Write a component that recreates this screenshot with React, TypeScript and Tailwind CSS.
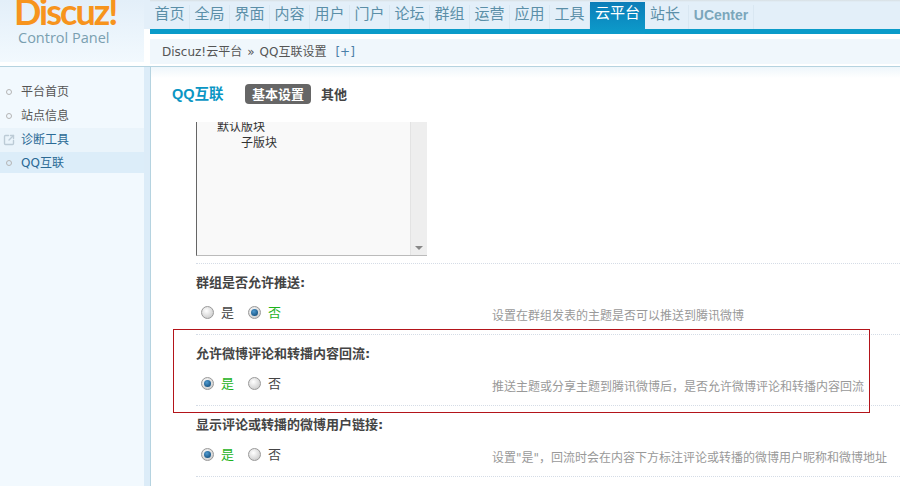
import React from 'react';
import { SquareArrowOutUpRight } from 'lucide-react';

const navItems = ['首页', '全局', '界面', '内容', '用户', '门户', '论坛', '群组', '运营', '应用', '工具'];

const sideItems = [
  { label: '平台首页', rowClass: 'h-6', textClass: 'text-[#555]' },
  { label: '站点信息', rowClass: 'h-6', textClass: 'text-[#555]' },
  { label: '诊断工具', rowClass: 'h-6 bg-[#eaf4fb]', textClass: 'text-[#2b6a95]', icon: true },
  { label: 'QQ互联', rowClass: 'h-[21px] bg-[#dcedf9]', textClass: 'text-[#2b6a95]' },
];

const settings = [
  { label: '群组是否允许推送:', yes: false, desc: '设置在群组发表的主题是否可以推送到腾讯微博' },
  { label: '允许微博评论和转播内容回流:', yes: true, desc: '推送主题或分享主题到腾讯微博后\uFF0C是否允许微博评论和转播内容回流' },
  { label: '显示评论或转播的微博用户链接:', yes: true, desc: '设置"是"\uFF0C回流时会在内容下方标注评论或转播的微博用户昵称和微博地址' },
];

function Radio({ checked }: { checked: boolean }) {
  return (
    <span className="flex h-[13px] w-[13px] items-center justify-center rounded-full border border-[#999] bg-[radial-gradient(circle_at_40%_35%,#fff,#c0c0c0)]">
      {checked && <span className="h-[7px] w-[7px] rounded-full bg-[radial-gradient(circle_at_40%_35%,#4f9ad0,#073f6c)]" />}
    </span>
  );
}

function Option({ label, checked }: { label: string; checked: boolean }) {
  return (
    <div className="flex w-[47px] items-center">
      <Radio checked={checked} />
      <span className={`ml-[7px] text-[13px] leading-none ${checked ? 'text-[#1db31d]' : 'text-[#444]'}`}>{label}</span>
    </div>
  );
}

function SettingRow({ label, yes, desc }: { label: string; yes: boolean; desc: string }) {
  return (
    <div className="h-[71px] border-t border-dotted border-[#d5dce6]">
      <div className="pt-[11px] text-[13px] leading-[16px] font-bold text-[#444]">{label}</div>
      <div className="mt-[15px] flex items-center pl-[5px]">
        <Option label="是" checked={yes} />
        <Option label="否" checked={!yes} />
        <span className="ml-[197px] translate-y-[3px] text-[12px] leading-none whitespace-nowrap text-[#999]">{desc}</span>
      </div>
    </div>
  );
}

export default function App() {
  return (
    <div className="relative flex h-[486px] w-[900px] flex-col overflow-hidden bg-white font-['DejaVu_Sans','Noto_Sans_CJK_SC',sans-serif]">
      {/* Header */}
      <div className="flex h-[67px] shrink-0 border-b border-[#b5d3e0]">
        <div className="h-[62px] w-[144px] shrink-0 overflow-hidden bg-[linear-gradient(#e3eff9,#f2f9fe)] pl-[14px]">
          <div className="mt-[-4px] font-['Lato',sans-serif] text-[36px] leading-[30px] font-bold tracking-[-2px] text-[#f7941d]">Discuz!</div>
          <div className="mt-[2px] pl-[4px] font-['Open_Sans',sans-serif] text-[14.5px] leading-[20px] text-[#7a9fb0]">Control Panel</div>
        </div>
        <div className="flex w-[6px] shrink-0 flex-col">
          <div className="h-[29px] bg-[#e3eff9]" />
        </div>
        <div className="flex min-w-0 flex-1 flex-col">
          <div className="flex h-[29px] bg-[linear-gradient(#d8dfe3_0px,#e3eff9_2px)]">
            {navItems.map((item) => (
              <div key={item} className="flex h-[24px] w-10 shrink-0 items-center justify-center self-end border-r border-[#d9e7f2] pb-[5px] text-[15px] leading-none text-[#5b8fa8]">
                {item}
              </div>
            ))}
            <div className="relative z-10 mt-[2px] flex h-[32px] w-[55px] shrink-0 items-center justify-center self-start bg-[linear-gradient(#0b7db8,#0d9ccb)] pb-[10px] text-[15px] leading-none text-white">
              云平台
            </div>
            <div className="ml-[5px] flex h-[24px] w-[39px] items-center self-end border-r border-[#d9e7f2] pb-[5px] text-[15px] leading-none text-[#5b8fa8]">
              站长
            </div>
            <div className="flex h-[24px] w-[65px] items-center justify-center self-end border-r border-[#d9e7f2] pb-[5px] font-['Liberation_Sans',sans-serif] text-[14px] leading-none font-bold text-[#7ba6bb]">
              UCenter
            </div>
          </div>
          <div className="h-[5px] bg-[#0a9bc9]" />
          <div className="mt-[5px] flex h-[25px] items-center bg-[#f0f7fc] pl-3 text-[12px] leading-none text-[#555]">
            <span>Discuz!云平台</span>
            <span className="mx-[5px]">»</span>
            <span>QQ互联设置</span>
            <span className="ml-[9px] font-medium text-[#4a7fa8]">[+]</span>
          </div>
        </div>
      </div>

      <div className="flex min-h-0 flex-1">
        {/* Sidebar */}
        <div className="flex w-[151px] shrink-0 border-r border-[#b5d3e0]">
          <div className="w-[144px] bg-[#f2f9fe] pt-[13px]">
            {sideItems.map((item) => (
              <div key={item.label} className={`flex items-center ${item.rowClass}`}>
                <div className="flex w-[21px] shrink-0 justify-center pr-[3px]">
                  {item.icon ? (
                    <SquareArrowOutUpRight className="h-3 w-3 text-[#bccbd6]" strokeWidth={2.75} />
                  ) : (
                    <span className="h-[6px] w-[6px] rounded-full border border-[#b5b5b5]" />
                  )}
                </div>
                <span className={`text-[12px] leading-none ${item.textClass}`}>{item.label}</span>
              </div>
            ))}
          </div>
          <div className="w-[6px] bg-[#dcecf8]" />
        </div>

        {/* Main */}
        <div className="min-w-0 flex-1 bg-[linear-gradient(#eef6fb,#fff_11px)] pl-[21px]">
          <div className="mt-[17px] flex h-[20px] items-center">
            <div className="w-[73px] font-['Liberation_Sans','Noto_Sans_CJK_SC',sans-serif] text-[14.5px] leading-none font-bold text-[#0a96c4]">QQ互联</div>
            <div className="flex h-[20px] w-[66px] items-center justify-center rounded-[4px] bg-[#666] text-[13px] leading-none font-bold text-white">基本设置</div>
            <div className="ml-[10px] text-[13px] leading-none font-bold text-[#444]">其他</div>
          </div>

          <div className="pl-[24px]">
            <div className="mt-[18px] flex h-[134px] w-[231px] overflow-hidden border-b border-l border-b-[#bbb] border-l-[#666] bg-[#f9f9f9]">
              <div className="min-w-0 flex-1 pl-[20px] text-[12px] leading-[16px] text-[#333]">
                <div className="mt-[-3px]">默认版块</div>
                <div className="pl-[24px]">子版块</div>
              </div>
              <div className="flex w-[17px] shrink-0 flex-col justify-end border-l border-[#e3e3e3] bg-[#eeeeee] pb-[5px]">
                <div className="mx-auto h-0 w-0 border-x-[4px] border-t-[4px] border-x-transparent border-t-[#888]" />
              </div>
            </div>
          </div>

          <div className="mt-[7px] pl-[24px]">
            {settings.map((row) => (
              <SettingRow key={row.label} {...row} />
            ))}
            <div className="border-t border-dotted border-[#d5dce6]" />
          </div>
        </div>
      </div>

      {/* Red annotation box */}
      <div className="absolute top-[329px] left-[173px] h-[84px] w-[697px] border border-[#b3141a]" />
    </div>
  );
}
